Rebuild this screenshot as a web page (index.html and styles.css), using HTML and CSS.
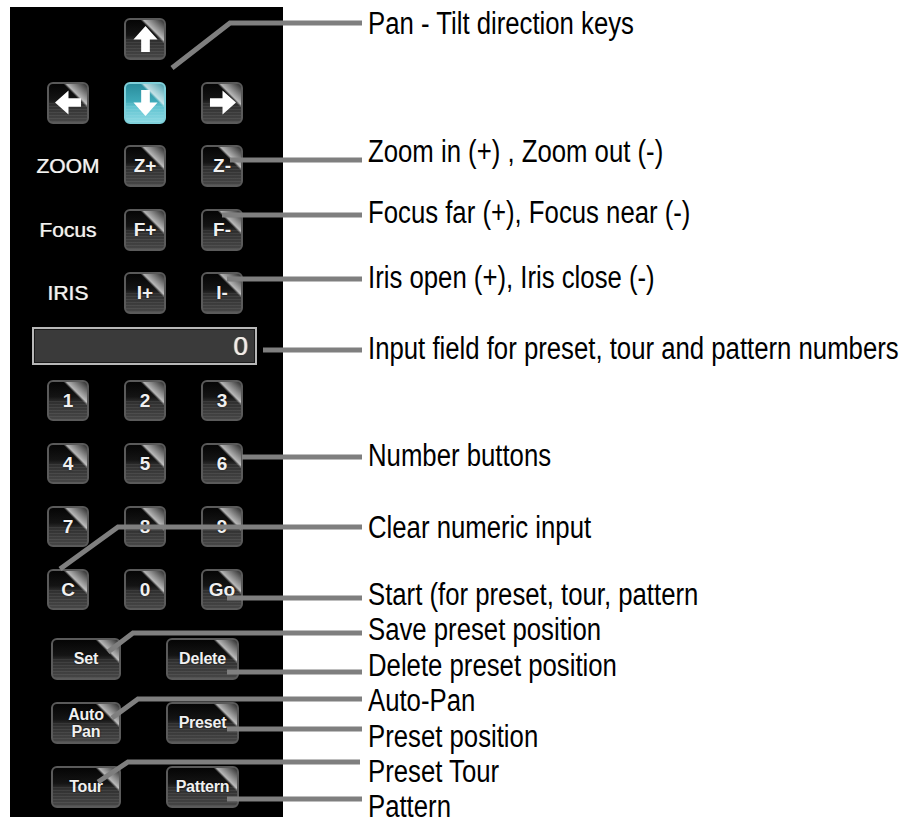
FILE: index.html
```html
<!DOCTYPE html>
<html lang="en">
<head>
<meta charset="utf-8">
<title>PTZ control panel</title>
<link rel="stylesheet" href="styles.css">
</head>
<body>
<div class="figure">
  <div class="panel">
    <div class="ptz">
      <div class="btn up"><svg class="ic" viewBox="0 0 28 28"><polygon points="14,0 26.5,14 18.5,14 18.5,27 9.5,27 9.5,14 1.5,14"/></svg></div>
      <div class="btn left"><svg class="ic rot-l" viewBox="0 0 28 28"><polygon points="14,0 26.5,14 18.5,14 18.5,27 9.5,27 9.5,14 1.5,14"/></svg></div>
      <div class="btn active"><svg class="ic rot-d" viewBox="0 0 28 28"><polygon points="14,0 26.5,14 18.5,14 18.5,27 9.5,27 9.5,14 1.5,14"/></svg></div>
      <div class="btn"><svg class="ic rot-r" viewBox="0 0 28 28"><polygon points="14,0 26.5,14 18.5,14 18.5,27 9.5,27 9.5,14 1.5,14"/></svg></div>
      <div class="lbl">ZOOM</div><div class="btn">Z+</div><div class="btn">Z-</div>
      <div class="lbl">Focus</div><div class="btn">F+</div><div class="btn">F-</div>
      <div class="lbl">IRIS</div><div class="btn">I+</div><div class="btn">I-</div>
    </div>
    <div class="readout">0</div>
    <div class="numpad">
      <div class="btn">1</div><div class="btn">2</div><div class="btn">3</div>
      <div class="btn">4</div><div class="btn">5</div><div class="btn">6</div>
      <div class="btn">7</div><div class="btn">8</div><div class="btn">9</div>
      <div class="btn">C</div><div class="btn">0</div><div class="btn">Go</div>
    </div>
    <div class="actions">
      <div class="btn wide">Set</div><div class="btn wide">Delete</div>
      <div class="btn wide two">Auto<br>Pan</div><div class="btn wide">Preset</div>
      <div class="btn wide">Tour</div><div class="btn wide">Pattern</div>
    </div>
  </div>
  <div class="labels">
    <p class="l-pan"><span>Pan - Tilt direction keys</span></p>
    <p class="l-zoom"><span>Zoom in (+) , Zoom out (-)</span></p>
    <p class="l-focus"><span>Focus far (+), Focus near (-)</span></p>
    <p class="l-iris"><span>Iris open (+), Iris close (-)</span></p>
    <p class="l-input"><span>Input field for preset, tour and pattern numbers</span></p>
    <p class="l-num"><span>Number buttons</span></p>
    <p class="l-clear"><span>Clear numeric input</span></p>
    <div class="stack">
      <p><span>Start (for preset, tour, pattern</span></p>
      <p><span>Save preset position</span></p>
      <p><span>Delete preset position</span></p>
      <p><span>Auto-Pan</span></p>
      <p><span>Preset position</span></p>
      <p><span>Preset Tour</span></p>
      <p><span>Pattern</span></p>
    </div>
  </div>
  <svg class="leaders" viewBox="0 0 901 825" width="901" height="825">
    <polyline points="172,68 230,23 362,23"/>
    <line x1="230" y1="160" x2="362" y2="160"/>
    <line x1="222" y1="215" x2="362" y2="215"/>
    <line x1="227" y1="279" x2="362" y2="279"/>
    <line x1="263" y1="350" x2="362" y2="350"/>
    <line x1="242" y1="457" x2="362" y2="457"/>
    <polyline points="60,569 118,527 362,527"/>
    <line x1="227" y1="598" x2="362" y2="598"/>
    <polyline points="108,652 133,633 362,633"/>
    <line x1="227" y1="672" x2="362" y2="672"/>
    <polyline points="112,718 138,699 362,699"/>
    <line x1="227" y1="729" x2="362" y2="729"/>
    <polyline points="98,782 128,762 360,762"/>
    <line x1="227" y1="799" x2="362" y2="799"/>
  </svg>
</div>
</body>
</html>
```

FILE: styles.css
```css
* { box-sizing: border-box; }
html, body { margin: 0; padding: 0; background: #fff; }
body {
  width: 901px;
  height: 825px;
  overflow: hidden;
  font-family: "Liberation Sans", Arial, sans-serif;
}

.figure {
  position: relative;
  display: flex;
  align-items: flex-start;
  width: 901px;
  height: 825px;
  padding: 7px 0 0 10px;
  overflow: hidden;
}

/* ---------- black control panel ---------- */
.panel {
  flex: none;
  width: 273px;
  height: 810px;
  background: #000;
  padding-top: 11px;
}

.ptz {
  display: grid;
  grid-template-columns: repeat(3, 42px);
  grid-auto-rows: 42px;
  column-gap: 35px;
  row-gap: 21.5px;
  padding-left: 37px;
}
.up { grid-column: 2; }
.left { grid-column: 1; }

.lbl {
  display: flex;
  align-items: center;
  justify-content: center;
  white-space: nowrap;
  color: #f3f3f3;
  font-size: 21px;
  text-shadow: -0.6px 0 rgba(255, 200, 90, 0.55), 0.6px 0 rgba(110, 170, 255, 0.55);
}

.btn {
  position: relative;
  display: flex;
  align-items: center;
  justify-content: center;
  overflow: hidden;
  border: 2px solid #5a5a5a;
  border-radius: 6px;
  background: linear-gradient(to bottom, #050505 0%, #141414 40%, #303030 55%, #464646 100%);
  color: #f0f0f0;
  font-weight: bold;
  font-size: 19px;
  text-shadow: 0 0 2px rgba(0, 0, 0, 0.9);
}
.btn::before {
  content: "";
  position: absolute;
  inset: 0;
  background: linear-gradient(225deg, rgba(255,255,255,0.15) 0px, rgba(255,255,255,0.7) 14.5px, rgba(255,255,255,0.2) 16px, rgba(255,255,255,0) 17px);
  pointer-events: none;
}
.btn::after {
  content: "";
  position: absolute;
  left: 0; right: 0; bottom: 0;
  height: 50%;
  background: repeating-linear-gradient(to bottom, rgba(255,255,255,0.07) 0 1px, rgba(255,255,255,0) 1px 3px);
  pointer-events: none;
}
.btn.active {
  border-color: #7fd0da;
  background: linear-gradient(to bottom, #2a8c9c 0%, #3ea9b8 45%, #62c4d1 60%, #8ad8e2 100%);
}

.ic {
  position: relative;
  z-index: 1;
  width: 27px;
  height: 27px;
  fill: #fff;
}
.rot-l { transform: rotate(-90deg); }
.rot-r { transform: rotate(90deg); }
.rot-d { transform: rotate(180deg); }

.readout {
  margin: 13px 0 0 22px;
  width: 225px;
  height: 38px;
  border: 2px solid #b8b8b8;
  box-shadow: inset 0 0 0 1px #1a1a1a;
  background: #3a3a3a;
  color: #f2eee8;
  font-size: 26px;
  line-height: 34px;
  text-align: right;
  padding-right: 7px;
  text-shadow: -0.7px 0 rgba(255, 190, 80, 0.7), 0.7px 0 rgba(100, 170, 255, 0.7);
}

.numpad {
  display: grid;
  grid-template-columns: repeat(3, 42px);
  grid-auto-rows: 41px;
  column-gap: 35px;
  row-gap: 22px;
  padding-left: 37px;
  margin-top: 15px;
}

.actions {
  display: grid;
  grid-template-columns: 70px 73px;
  grid-auto-rows: 42px;
  column-gap: 45px;
  row-gap: 22px;
  padding-left: 41px;
  margin-top: 28px;
}
.btn.wide {
  font-size: 16px;
  letter-spacing: -0.2px;
}
.btn.two {
  text-align: center;
  line-height: 17px;
}

/* ---------- callout labels ---------- */
.labels {
  flex: none;
  width: 533px;
  margin-left: 85px;
  overflow: hidden;
  color: #000;
  font-family: "Liberation Sans", Arial, sans-serif;
  font-size: 31px;
  line-height: 36px;
  white-space: nowrap;
}
.labels p { margin: 0; height: 36px; }
/* the annotation face is a narrow grotesque: condense the regular face */
.labels span {
  display: inline-block;
  transform: scaleX(0.83);
  transform-origin: 0 50%;
}
.labels .l-pan { margin-top: -1px; }
.labels .l-zoom { margin-top: 92px; }
.labels .l-focus { margin-top: 25px; }
.labels .l-iris { margin-top: 29px; }
.labels .l-input { margin-top: 35px; }
.labels .l-num { margin-top: 71px; }
.labels .l-clear { margin-top: 36px; }
.stack { margin-top: 31px; }
.labels .stack p { height: 35.4px; line-height: 35.4px; }
.labels .stack p:last-child { height: 36px; line-height: 36px; }

/* ---------- leader lines (drawn over the panel) ---------- */
.leaders {
  position: absolute;
  left: 0;
  top: 0;
  pointer-events: none;
  fill: none;
  stroke: #7f7f7f;
  stroke-width: 5;
}
```
